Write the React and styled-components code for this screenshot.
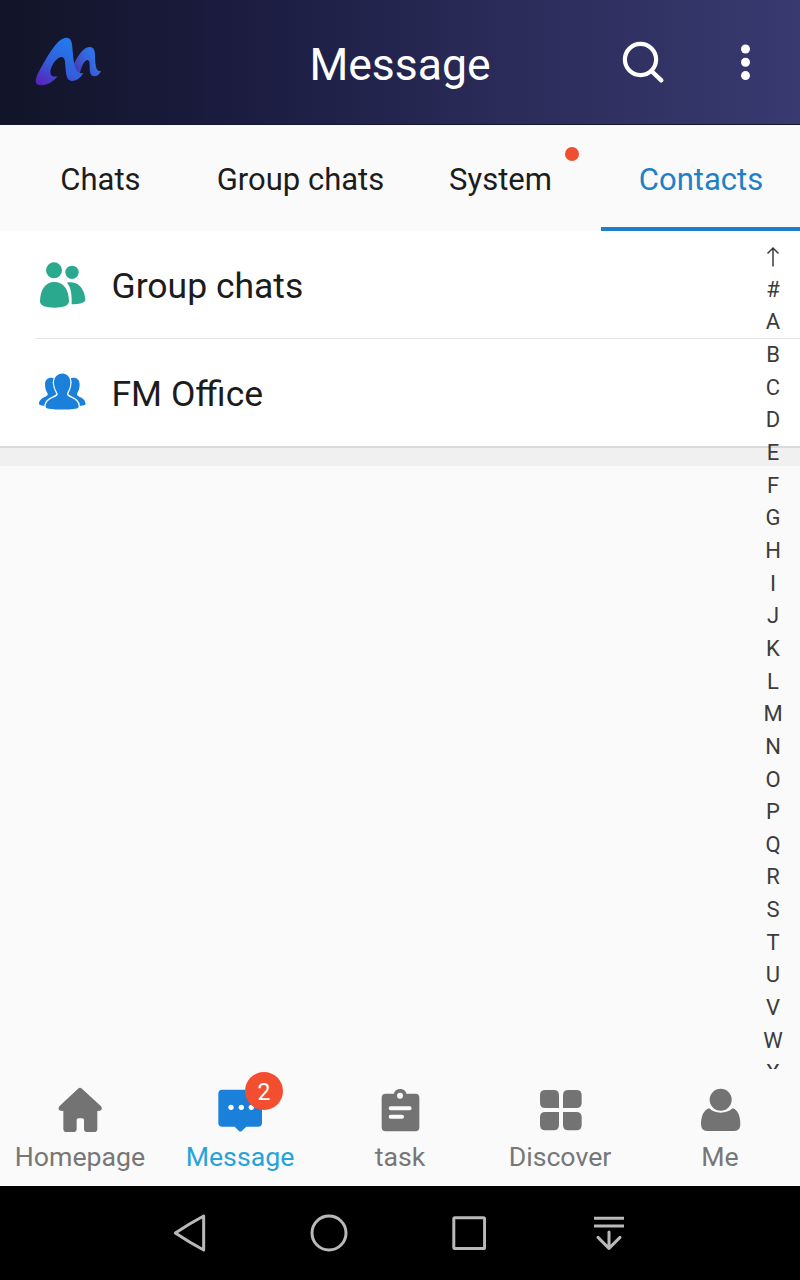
import React from 'react';
import styled, {createGlobalStyle} from "styled-components";

const GlobalStyle = createGlobalStyle`
  * {
    box-sizing: border-box;
  }

  body {
    margin: 0;
    background: #fafafa;
    font-family: Roboto, "Liberation Sans", sans-serif;
  }

  svg {
    display: block;
    flex: none;
  }
`

const Screen = styled.div`
  width: 800px;
  height: 1280px;
  display: flex;
  flex-direction: column;
  overflow: hidden;
  background: #fafafa;
`

const TopBar = styled.header`
  height: 125px;
  flex: none;
  display: grid;
  grid-template-columns: 1fr auto 1fr;
  align-items: center;
  padding: 0 50px 0 33px;
  background: linear-gradient(90deg, #121428 0%, #1b1c40 30%, #2a2b58 62%, #383a70 100%);
  border-bottom: 1px solid #15162f;
`

const Title = styled.h1`
  margin: 5px 0 0 17px;
  font-size: 44.5px;
  line-height: 52px;
  font-weight: 400;
  color: #fff;
`

const Actions = styled.div`
  display: flex;
  justify-content: flex-end;
  align-items: center;
  gap: 75px;
  padding-top: 1px;
`

const Tabs = styled.nav`
  height: 106px;
  flex: none;
  display: grid;
  grid-template-columns: repeat(4, 1fr);
`

const Tab = styled.div`
  position: relative;
  display: flex;
  align-items: center;
  justify-content: center;
  padding: ${p => p.$active ? "6px 0 0 1px" : "2px 0 0 1px"};
  margin-left: ${p => p.$active ? "1px" : "0"};
  border-bottom: ${p => p.$active ? "4px solid #1e80c7" : "none"};
  font-size: 31px;
  color: ${p => p.$active ? "#1e80c7" : "#1c1c1c"};
`

const Dot = styled.span`
  position: absolute;
  top: 22px;
  right: 21px;
  width: 14px;
  height: 14px;
  border-radius: 50%;
  background: #f04e30;
`

const Content = styled.main`
  position: relative;
  flex: 1;
  overflow: hidden;
`

const List = styled.div`
  background: #fff;
  border-bottom: 2px solid #dadada;
`

const Row = styled.div`
  height: ${p => p.$last ? "107px" : "108px"};
  display: flex;
  align-items: center;
  gap: 25.5px;
  padding: 1px 0 0 3px;
  margin-left: 36px;
  border-bottom: ${p => p.$last ? "none" : "1px solid #e6e6e6"};
`

const RowLabel = styled.span`
  padding-top: 1px;
  font-size: 35.5px;
  color: #1c1c1c;
`

const Strip = styled.div`
  height: 18px;
  background: #f0f0f0;
`

const Index = styled.div`
  position: absolute;
  top: 10px;
  right: 0;
  bottom: 0;
  width: 54px;
  overflow: hidden;
  text-align: center;
  font-size: 22px;
  line-height: 32.66px;
  color: #3c3c3c;
`

const Letter = styled.div`
  height: 32.66px;
  display: flex;
  justify-content: center;
  align-items: center;
`

const BottomNav = styled.nav`
  height: 117px;
  flex: none;
  display: grid;
  grid-template-columns: repeat(5, 1fr);
`

const NavItem = styled.div`
  position: relative;
  display: flex;
  flex-direction: column;
  align-items: center;
  padding-top: 17px;
  font-size: 26.7px;
  line-height: 32px;
  color: ${p => p.$active ? "#27a3d9" : "#777"};
`

const NavLabel = styled.span`
  margin-top: 7px;
`

const Badge = styled.span`
  position: absolute;
  top: 3px;
  left: 85px;
  width: 38px;
  height: 38px;
  display: flex;
  align-items: center;
  justify-content: center;
  padding-top: 3px;
  border-radius: 50%;
  background: #f44e30;
  color: #fff;
  font-size: 23px;
`

const SystemBar = styled.footer`
  height: 94px;
  flex: none;
  display: grid;
  grid-template-columns: repeat(4, 140px);
  padding-left: 119px;
  align-items: center;
  justify-items: center;
  background: #000;
`

const Logo = () => (
    <svg width="70" height="54" viewBox="99 105 210 162">
        <defs>
            <linearGradient id="logoFront" x1="0.65" y1="0.1" x2="0.1" y2="1">
                <stop offset="0" stopColor="#2478ea"/>
                <stop offset="0.5" stopColor="#335fdc"/>
                <stop offset="1" stopColor="#5a22b8"/>
            </linearGradient>
            <linearGradient id="logoBack" x1="0.7" y1="0.2" x2="0" y2="0.7">
                <stop offset="0" stopColor="#2f74e8"/>
                <stop offset="0.5" stopColor="#3a5cd6"/>
                <stop offset="1" stopColor="#4a36b4"/>
            </linearGradient>
        </defs>
        <path fill="url(#logoBack)" d="M221 194C232 170 248 142 268 141C280 140 285 150 285 165C285 190 288 209 295 212Q299 214 303 212C299 223 291 229 283 229C269 229 269 212 269 198C269 186 268 180 262 180C252 181 243 203 240 219H225Z"/>
        <path fill="url(#logoFront)" d="M107 243C109 225 122 205 134 184C150 157 173 116 198 113C212 112 216 125 217 142C219 165 221 196 229 210C234 219 242 221 250 219C241 235 229 243 216 243C202 242 199 230 197 210C195 188 197 171 184 171C168 172 148 204 152 222C155 231 164 231 173 228C161 245 142 255 124 256C113 256 107 252 107 243Z"/>
    </svg>
);

const SearchIcon = () => (
    <svg width="43" height="43" viewBox="0 0 43 43" fill="none" stroke="#fff" strokeLinecap="round">
        <circle cx="18.5" cy="18.5" r="15.6" strokeWidth="4.2"/>
        <path d="M30 30.5L39.3 39.3" strokeWidth="4.4"/>
    </svg>
);

const MoreIcon = () => (
    <svg width="10" height="37" viewBox="0 0 10 37" fill="#fff">
        <circle cx="5.5" cy="5" r="4.5"/>
        <circle cx="5.5" cy="18.3" r="4.5"/>
        <circle cx="5.5" cy="31.6" r="4.5"/>
    </svg>
);

const GroupIcon = () => (
    <svg width="47" height="46" viewBox="117 95 141 138" fill="#2aa98f">
        <circle cx="162" cy="120" r="24"/>
        <circle cx="216" cy="126" r="20"/>
        <path d="M120 213C121 179 135 155 163 155C192 155 206 179 207 213C207 227 188 232 163 232C138 232 120 227 120 213Z"/>
        <path d="M201 157C229 152 252 168 256 207C257 219 235 222 215 222C216 194 213 171 201 157Z"/>
    </svg>
);

const OfficeIcon = () => (
    <svg width="47" height="40" viewBox="117 431 141 120" fill="#1a80da">
        <path d="M168 448C148 441 135 448 135 466C135 479 140 487 143 493C146 504 117 501 117 525Q122 530 140 530H187V448Z"/>
        <path d="M206 448C226 441 239 448 239 466C239 479 234 487 231 493C228 504 257 501 257 525Q252 530 234 530H187V448Z"/>
        <path stroke="#fff" strokeWidth="8" paintOrder="stroke" d="M187 432.500C173 432.500 162 443 162 459C162 476 170 486 173 493C176 505 137 504 137 532Q137 537 147 538Q187 543 226 538Q236 537 236 532C236 504 198 505 201 493C204 486 211 476 211 459C211 443 201 432.500 187 432.500Z"/>
    </svg>
);

const HomeIcon = () => (
    <svg width="44" height="48" viewBox="174 78 132 144" fill="#737373">
        <path d="M234 86Q240 81 246 86L303 139Q307 144 304 150Q302 153 292 153V206Q292 216 282 216H262Q252 216 252 206V180Q252 175 247 175H235Q230 175 230 180V206Q230 216 220 216H200Q190 216 190 206V153Q180 153 177 150Q174 144 178 139Z"/>
    </svg>
);

const ChatIcon = () => (
    <svg width="44" height="48" viewBox="654 78 132 144" fill="#1a80da">
        <path d="M667 89H774Q786 89 786 101V188Q786 200 774 200H739L726 212Q721 217 716 212L704 200H667Q655 200 655 188V101Q655 89 667 89Z"/>
        <g fill="#fff">
            <circle cx="693" cy="142" r="8"/>
            <circle cx="724" cy="142" r="8"/>
            <circle cx="754" cy="142" r="8"/>
        </g>
    </svg>
);

const TaskIcon = () => (
    <svg width="44" height="48" viewBox="115 78 132 144">
        <path fill="#737373" d="M138 101H163C165 82 198 82 200 101H227Q239 101 239 113V202Q239 214 227 214H138Q126 214 126 202V113Q126 101 138 101Z"/>
        <circle cx="181" cy="107" r="9" fill="#fafafa"/>
        <path d="M153 145H210M153 170H187" stroke="#fafafa" strokeWidth="12" strokeLinecap="round"/>
    </svg>
);

const DiscoverIcon = () => (
    <svg width="44" height="48" viewBox="594 78 132 144" fill="#737373">
        <path d="M616 90H641Q657 90 657 106V144H616Q600 144 600 128V106Q600 90 616 90Z"/>
        <path d="M685 90H709Q725 90 725 106V128Q725 144 709 144H669V106Q669 90 685 90Z"/>
        <path d="M616 156H657V195Q657 211 641 211H616Q600 211 600 195V172Q600 156 616 156Z"/>
        <path d="M669 156H709Q725 156 725 172V195Q725 211 709 211H685Q669 211 669 195Z"/>
    </svg>
);

const MeIcon = () => (
    <svg width="44" height="48" viewBox="414 136 132 144" fill="#737373">
        <circle cx="482" cy="177" r="33"/>
        <path d="M448 203Q461 216 482 216Q503 216 518 203C534 207 541 228 541 251Q541 271 523 271H441Q423 271 423 251C423 228 431 207 448 203Z"/>
    </svg>
);

const BackIcon = () => (
    <svg width="34" height="40" viewBox="66 100 102 120" fill="none" stroke="#b9b9b9" strokeWidth="9" strokeLinejoin="round">
        <path d="M161 109V211Q118 188 76 160Q118 132 161 109Z"/>
    </svg>
);

const CircleIcon = () => (
    <svg width="38" height="38" viewBox="0 0 38 38" fill="none" stroke="#b9b9b9" strokeWidth="3">
        <circle cx="19" cy="19" r="17"/>
    </svg>
);

const SquareIcon = () => (
    <svg width="34" height="34" viewBox="0 0 34 34" fill="none" stroke="#b9b9b9" strokeWidth="3">
        <rect x="1.8" y="1.8" width="30.8" height="30.8" rx="1"/>
    </svg>
);

const HideBarIcon = () => (
    <svg width="32" height="36" viewBox="1329 106 96 108" fill="none" stroke="#b9b9b9" strokeWidth="9">
        <path d="M1332 115.5H1422M1332 139H1422"/>
        <path d="M1377 157V206M1344 173L1377 206L1410 173" strokeLinecap="round" strokeLinejoin="round"/>
    </svg>
);

const UpArrow = () => (
    <svg width="14" height="22" viewBox="0 0 14 22" fill="none" stroke="#3c3c3c" strokeWidth="1.5">
        <path d="M7 20.5V2M1.5 7.5L7 2L12.5 7.5"/>
    </svg>
);

const letters = "#ABCDEFGHIJKLMNOPQRSTUVWX".split("");

const App = () => {
    return (
        <Screen>
            <GlobalStyle/>
            <TopBar>
                <Logo/>
                <Title>Message</Title>
                <Actions>
                    <SearchIcon/>
                    <MoreIcon/>
                </Actions>
            </TopBar>
            <Tabs>
                <Tab>Chats</Tab>
                <Tab>Group chats</Tab>
                <Tab>System<Dot/></Tab>
                <Tab $active>Contacts</Tab>
            </Tabs>
            <Content>
                <List>
                    <Row><GroupIcon/><RowLabel>Group chats</RowLabel></Row>
                    <Row $last><OfficeIcon/><RowLabel>FM Office</RowLabel></Row>
                </List>
                <Strip/>
                <Index>
                    <Letter><UpArrow/></Letter>
                    {letters.map(letter => <Letter key={letter}>{letter}</Letter>)}
                </Index>
            </Content>
            <BottomNav>
                <NavItem><HomeIcon/><NavLabel>Homepage</NavLabel></NavItem>
                <NavItem $active><ChatIcon/><Badge>2</Badge><NavLabel>Message</NavLabel></NavItem>
                <NavItem><TaskIcon/><NavLabel>task</NavLabel></NavItem>
                <NavItem><DiscoverIcon/><NavLabel>Discover</NavLabel></NavItem>
                <NavItem><MeIcon/><NavLabel>Me</NavLabel></NavItem>
            </BottomNav>
            <SystemBar>
                <BackIcon/>
                <CircleIcon/>
                <SquareIcon/>
                <HideBarIcon/>
            </SystemBar>
        </Screen>
    );
};

export default App;
